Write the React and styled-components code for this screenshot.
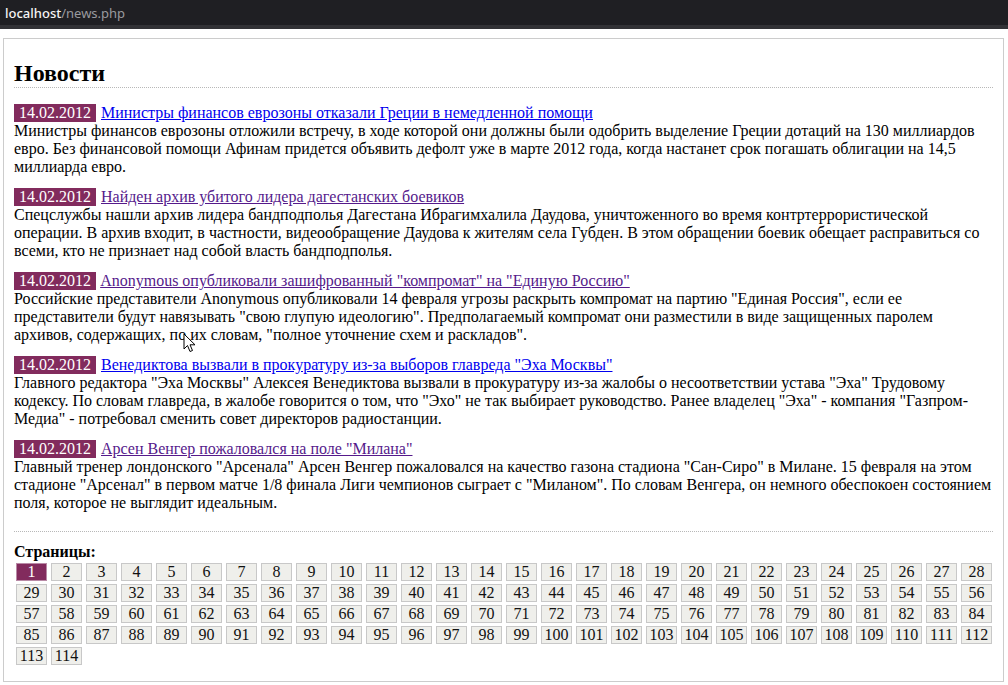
import React from 'react';
import styled, { createGlobalStyle } from 'styled-components';

const GlobalStyle = createGlobalStyle`
  html, body {
    margin: 0;
    padding: 0;
    background: #ffffff;
  }
  body {
    font-family: "Liberation Serif", "Times New Roman", serif;
    font-size: 16px;
    color: #000;
  }
`;

const news = [
  {
    title: 'Министры финансов еврозоны отказали Греции в немедленной помощи',
    visited: false,
    text: 'Министры финансов еврозоны отложили встречу, в ходе которой они должны были одобрить выделение Греции дотаций на 130 миллиардов евро. Без финансовой помощи Афинам придется объявить дефолт уже в марте 2012 года, когда настанет срок погашать облигации на 14,5 миллиарда евро.',
  },
  {
    title: 'Найден архив убитого лидера дагестанских боевиков',
    visited: true,
    text: 'Спецслужбы нашли архив лидера бандподполья Дагестана Ибрагимхалила Даудова, уничтоженного во время контртеррористической операции. В архив входит, в частности, видеообращение Даудова к жителям села Губден. В этом обращении боевик обещает расправиться со всеми, кто не признает над собой власть бандподполья.',
  },
  {
    title: 'Anonymous опубликовали зашифрованный "компромат" на "Единую Россию"',
    visited: true,
    text: 'Российские представители Anonymous опубликовали 14 февраля угрозы раскрыть компромат на партию "Единая Россия", если ее представители будут навязывать "свою глупую идеологию". Предполагаемый компромат они разместили в виде защищенных паролем архивов, содержащих, по их словам, "полное уточнение схем и раскладов".',
  },
  {
    title: 'Венедиктова вызвали в прокуратуру из-за выборов главреда "Эха Москвы"',
    visited: false,
    text: 'Главного редактора "Эха Москвы" Алексея Венедиктова вызвали в прокуратуру из-за жалобы о несоответствии устава "Эха" Трудовому кодексу. По словам главреда, в жалобе говорится о том, что "Эхо" не так выбирает руководство. Ранее владелец "Эха" - компания "Газпром-Медиа" - потребовал сменить совет директоров радиостанции.',
  },
  {
    title: 'Арсен Венгер пожаловался на поле "Милана"',
    visited: true,
    text: 'Главный тренер лондонского "Арсенала" Арсен Венгер пожаловался на качество газона стадиона "Сан-Сиро" в Милане. 15 февраля на этом стадионе "Арсенал" в первом матче 1/8 финала Лиги чемпионов сыграет с "Миланом". По словам Венгера, он немного обеспокоен состоянием поля, которое не выглядит идеальным.',
  },
];

const pages = Array.from({ length: 114 }, (_, i) => i + 1);

const Window = styled.div`
  position: relative;
  width: 1008px;
  min-height: 685px;
`;

const AddressBar = styled.div`
  height: 25px;
  background: #1f1f23;
  border-bottom: 4px solid #323236;
  display: flex;
  align-items: center;
  padding-left: 5px;
  font-family: "Noto Sans", "Open Sans", sans-serif;
  font-size: 13px;
`;

const Host = styled.span`
  color: #f4f4f4;
  font-weight: 500;
`;

const Path = styled.span`
  color: #9a9a9e;
`;

const Page = styled.div`
  padding: 9px 4px 3px 3px;
`;

const Box = styled.div`
  border: 1px solid #cccccc;
  padding: 10px 10px 16px;
`;

const Heading = styled.h1`
  margin: 10px 0 16px;
  font-size: 24px;
  line-height: 28px;
  font-weight: bold;
  border-bottom: 1px dotted #b8b8b8;
`;

const List = styled.div`
  display: flex;
  flex-direction: column;
  gap: 12px;
`;

const Item = styled.div`
  line-height: 18px;
`;

const TitleRow = styled.div`
  line-height: 18px;
  white-space: nowrap;
`;

const DateBadge = styled.span`
  display: inline-block;
  height: 18px;
  padding: 0 5px;
  margin-right: 1px;
  background: #822b5d;
  color: #ffffff;
  vertical-align: top;
`;

const TitleLink = styled.a`
  color: ${(p) => (p.$visited ? '#551a8b' : '#0000ee')};
  text-decoration: underline;
  cursor: pointer;
`;

const Body = styled.div`
  line-height: 18px;
`;

const Divider = styled.div`
  margin-top: 19px;
  border-top: 1px dotted #b8b8b8;
`;

const PagesLabel = styled.div`
  margin-top: 10px;
  font-weight: bold;
  line-height: 20px;
`;

const Pager = styled.div`
  display: flex;
  flex-wrap: wrap;
  gap: 3px 4px;
  padding-left: 2px;
  margin-top: 1px;
`;

const PageButton = styled.span`
  box-sizing: border-box;
  width: 31px;
  height: 18px;
  line-height: 16px;
  text-align: center;
  border: 1px solid ${(p) => (p.$active ? '#b98aa6' : '#c8c8c8')};
  background: ${(p) => (p.$active ? '#822b5d' : '#efefeb')};
  color: ${(p) => (p.$active ? '#ffffff' : '#111111')};
`;

const Cursor = styled.svg`
  position: absolute;
  left: 183px;
  top: 333px;
  pointer-events: none;
`;

export default function App() {
  return (
    <Window>
      <GlobalStyle />
      <AddressBar>
        <Host>localhost</Host>
        <Path>/news.php</Path>
      </AddressBar>
      <Page>
        <Box>
          <Heading>Новости</Heading>
          <List>
            {news.map((n) => (
              <Item key={n.title}>
                <TitleRow>
                  <DateBadge>14.02.2012</DateBadge>
                  {' '}
                  <TitleLink href="#" $visited={n.visited}>{n.title}</TitleLink>
                </TitleRow>
                <Body>{n.text}</Body>
              </Item>
            ))}
          </List>
          <Divider />
          <PagesLabel>Страницы:</PagesLabel>
          <Pager>
            {pages.map((p) => (
              <PageButton key={p} $active={p === 1}>{p}</PageButton>
            ))}
          </Pager>
        </Box>
      </Page>
      <Cursor width="13" height="20" viewBox="0 0 13 20">
        <path d="M1 1 L1 16 L4.5 12.5 L7 18.5 L9.5 17.5 L7 11.8 L12 11.8 Z" fill="#ffffff" stroke="#000000" strokeWidth="1" strokeLinejoin="round" />
      </Cursor>
    </Window>
  );
}
